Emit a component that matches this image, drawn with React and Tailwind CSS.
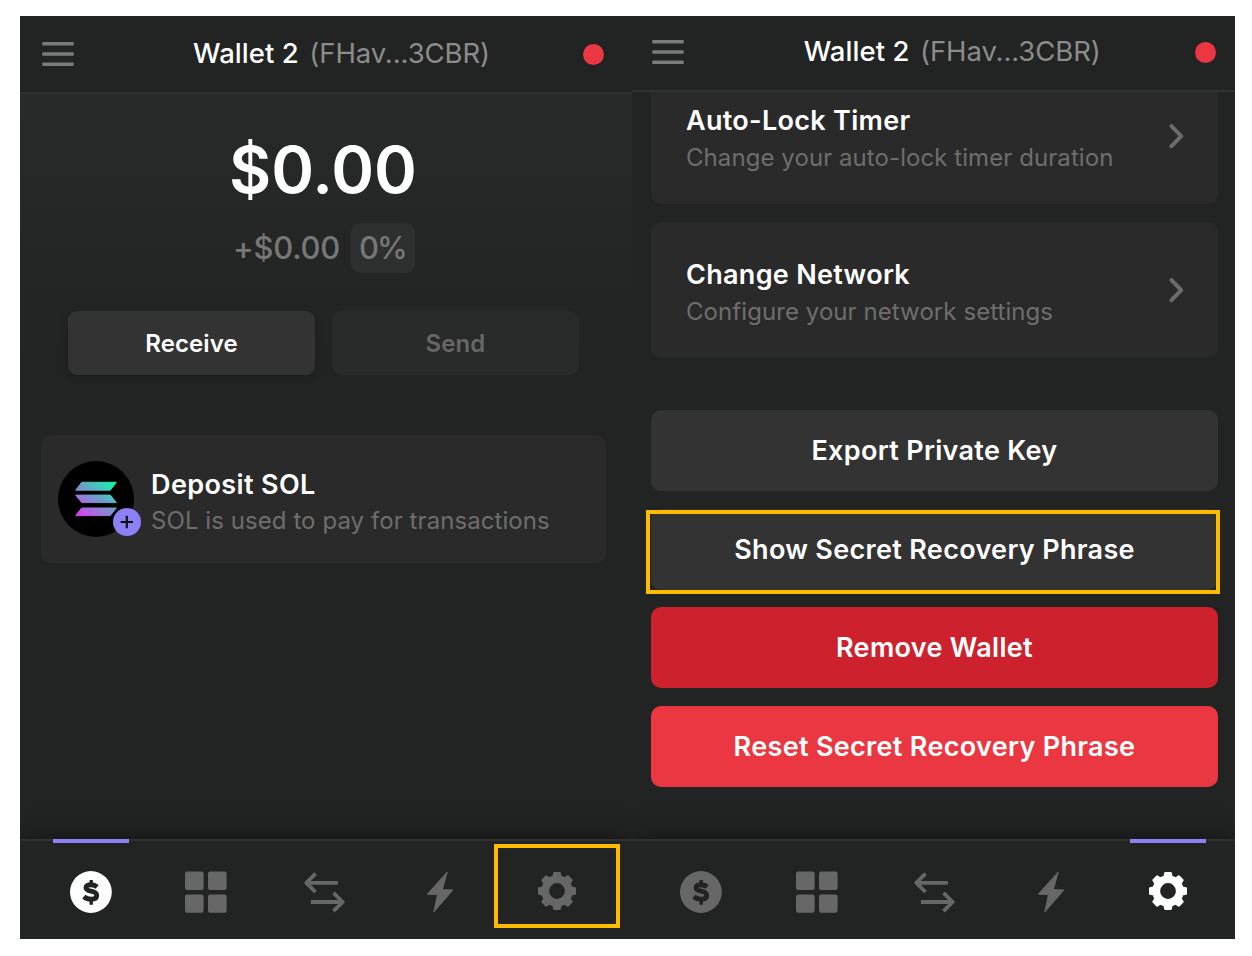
import React from "react";

const COIN_S = "M27.2 15.9C25.4 14.4 23.2 13.7 21.1 13.7C18 13.7 16 14.7 16 16.8C16 19 18.2 19.6 21.1 20.2C24.4 20.9 26.7 21.8 26.7 24.5C26.7 27.1 24.4 28.3 21.2 28.3C18.3 28.3 15.8 27.3 13.8 25.6";

function CoinIcon() {
  return (
    <svg width="42" height="42" viewBox="0 0 42 42" fill="none">
      <circle cx="20.9" cy="21" r="20.9" fill="currentColor" />
      <path d={COIN_S} stroke="#222423" strokeWidth="4.9" />
      <path d="M21.2 9V13.5M21.2 28.5V33.8" stroke="#222423" strokeWidth="3.4" />
    </svg>
  );
}

function GridIcon() {
  return (
    <svg width="42" height="42" viewBox="0.7 -0.2 42 42" fill="currentColor" className="-ml-[1.6px]">
      <rect x="0.7" y="0.2" width="18.6" height="18.6" rx="2" />
      <rect x="23.7" y="0.2" width="18.6" height="18.6" rx="2" />
      <rect x="0.7" y="23.2" width="18.6" height="18.4" rx="2" />
      <rect x="23.7" y="23.2" width="18.6" height="18.4" rx="2" />
    </svg>
  );
}

function SwapIcon() {
  return (
    <svg width="42" height="42" viewBox="-0.5 0 42 42" fill="none" stroke="currentColor" strokeWidth="3.8">
      <path d="M34.4 11.8H3M12 2.6L2.8 11.8L12 21" strokeLinejoin="round" />
      <path d="M7.4 31H39M30 21.8L39.2 31L30 40.2" strokeLinejoin="round" />
    </svg>
  );
}

function BoltIcon() {
  return (
    <svg width="42" height="42" viewBox="0 0 42 42" fill="currentColor" stroke="currentColor" strokeWidth="1" strokeLinejoin="round">
      <path d="M28.2 1L23.3 18.6L33.9 19L14.8 41L18.5 23.6L8.3 23.2Z" />
    </svg>
  );
}

function GearIcon() {
  return (
    <svg width="42" height="42" viewBox="-21 -21 42 42" fill="currentColor">
      <circle r="11.8" fill="none" stroke="currentColor" strokeWidth="7.8" />
      {[0, 45, 90, 135, 180, 225, 270, 315].map((angle) => (
        <path
          key={angle}
          transform={`rotate(${angle})`}
          stroke="currentColor"
          strokeWidth="2"
          strokeLinejoin="round"
          d="M-2.8 -18H2.8L3.6 -14H-3.6Z"
        />
      ))}
    </svg>
  );
}

function MenuIcon() {
  return (
    <svg width="32" height="26" viewBox="0 0 32 26" fill="#7b7b7b" className="block">
      <rect x="0.3" y="1" width="31.4" height="3.5" rx="0.6" />
      <rect x="0.3" y="11.2" width="31.4" height="3.5" rx="0.6" />
      <rect x="0.3" y="21.4" width="31.4" height="3.5" rx="0.6" />
    </svg>
  );
}

function SolanaIcon() {
  return (
    <svg width="43" height="36" viewBox="0.5 0 43 36" className="block">
      <defs>
        <linearGradient id="solana" gradientUnits="userSpaceOnUse" x1="38" y1="-3" x2="9" y2="38">
          <stop offset="0.08" stopColor="#19f2ae" />
          <stop offset="0.5" stopColor="#6f9ccb" />
          <stop offset="1" stopColor="#dc3fee" />
        </linearGradient>
      </defs>
      <g fill="url(#solana)" stroke="url(#solana)" strokeWidth="1" strokeLinejoin="round">
        <path d="M7.2 1.3H41.8L35.8 9.2H1.1Z" />
        <path d="M1.1 14.1H35.8L41.8 21.6H7.2Z" />
        <path d="M7.2 27H41.8L35.8 34.6H1.1Z" />
      </g>
    </svg>
  );
}

function Chevron() {
  return (
    <svg width="16" height="26" viewBox="0 0 16 26" fill="none" stroke="#6c6c6c" strokeWidth="4" strokeLinecap="round" strokeLinejoin="round" className="block">
      <path d="M2.5 3.2L12.2 13.2L2.5 23.2" />
    </svg>
  );
}

function Title() {
  return (
    <div className="flex w-[297px] shrink-0 gap-[10.5px] whitespace-nowrap text-[27.5px] leading-[34px]">
      <span className="font-medium tracking-[0.05px] text-white">Wallet 2</span>
      <span className="tracking-[-0.08px] text-[#8c8c8c]">(FHav...3CBR)</span>
    </div>
  );
}

const TABS = [
  { name: "balance", Icon: CoinIcon },
  { name: "collectibles", Icon: GridIcon },
  { name: "swap", Icon: SwapIcon },
  { name: "activity", Icon: BoltIcon },
  { name: "settings", Icon: GearIcon },
];

function TabBar({ active, highlight, className }) {
  return (
    <nav className={"z-10 h-[100px] shrink-0 border-t-2 border-[#303030] bg-[#222423] shadow-[0_-4px_24px_rgba(0,0,0,0.38)] " + className}>
      <div className="grid h-full w-[583px] grid-cols-5">
        {TABS.map(({ name, Icon }) => (
          <div
            key={name}
            className={"relative flex justify-center pt-[30px] " + (name === active ? "text-white" : "text-[#676767]")}
          >
            {name === active && <span className="absolute -top-[2px] left-[20.3px] h-[3.6px] w-[76px] bg-[#8b80f5]" />}
            <span className={name === "settings" ? "-mt-[1.5px]" : ""}>
              <Icon />
            </span>
            {name === highlight && (
              <span className="absolute -left-[4.6px] top-[3px] h-[84px] w-[126px] border-4 border-[#ffbb00]" />
            )}
          </div>
        ))}
      </div>
    </nav>
  );
}

function SettingsRow({ title, detail, className }) {
  return (
    <div className={"flex h-[136px] shrink-0 items-center justify-between rounded-[10px] bg-[#2a2a2a] pl-[35px] pr-[33px] " + className}>
      <div className="whitespace-nowrap pt-[6px]">
        <div className="text-[27px] font-semibold leading-[38px] tracking-[0.3px] text-white">{title}</div>
        <div className="-mt-[1px] pb-[1px] text-[24px] leading-[37px] tracking-[0.07px] text-[#6e6e6e]">{detail}</div>
      </div>
      <Chevron />
    </div>
  );
}

function ActionButton({ children, className }) {
  return (
    <button className={"relative flex h-[81px] w-full shrink-0 items-center justify-center whitespace-nowrap rounded-[10px] pt-[1px] text-[27px] font-semibold tracking-[0.32px] text-white " + className}>
      {children}
    </button>
  );
}

function WalletPanel() {
  return (
    <section className="flex w-[612px] flex-col overflow-hidden bg-[#222423]">
      <header className="flex h-[78px] shrink-0 items-center border-b-2 border-[#303131] pl-[22px]">
        <MenuIcon />
        <div className="ml-[119px] -mt-[2px]">
          <Title />
        </div>
        <span className="ml-[93px] size-[21px] rounded-full bg-[#eb3742]" />
      </header>
      <main className="flex grow flex-col bg-[linear-gradient(#282a29_0px,#222423_260px)]">
        <div className="mt-[36px] flex h-[80px] w-[606px] items-center justify-center whitespace-nowrap text-[65px] font-semibold text-white">
          $0.00
        </div>
        <div className="ml-[213px] mt-[13px] flex h-[50px] items-center text-[31px] font-medium text-[#777777]">
          <span className="w-[118px] pt-[1px] tracking-[-0.25px]">+$0.00</span>
          <span className="flex h-[50px] w-[64px] items-center justify-center rounded-[10px] bg-[#2e2f2f] pr-[1px] pt-[1px] text-[31px] tracking-[-1.8px]">0%</span>
        </div>
        <div className="ml-[48px] mt-[38px] grid h-[64px] w-[511px] grid-cols-2 gap-[17px] text-[24px] font-semibold">
          <button className="rounded-[9px] bg-[#333333] pt-[2px] tracking-[0.1px] text-white shadow-[0_2px_8px_rgba(0,0,0,0.2)]">Receive</button>
          <button className="rounded-[9px] bg-[#292a2a] pt-[2px] tracking-[0.1px] text-[#676767]">Send</button>
        </div>
        <div className="ml-[21px] mt-[60px] flex h-[128px] w-[565px] items-center rounded-[10px] bg-[#2a2a2a] pl-[17px]">
          <div className="relative flex size-[76px] items-center justify-center rounded-full bg-black">
            <SolanaIcon />
            <span className="absolute left-[55px] top-[46.5px] flex size-[28px] items-center justify-center rounded-full bg-[#8b80f5]">
              <svg width="14" height="14" viewBox="0 0 14 14" stroke="#111111" strokeWidth="2.2">
                <path d="M6.8 0.8V13.2M0.6 7H13" />
              </svg>
            </span>
          </div>
          <div className="ml-[17px] whitespace-nowrap pt-[7px]">
            <div className="text-[27px] font-semibold leading-[36px] tracking-[0.38px] text-white">Deposit SOL</div>
            <div className="text-[24px] leading-[36px] tracking-[0.07px] text-[#6e6e6e]">SOL is used to pay for transactions</div>
          </div>
        </div>
      </main>
      <TabBar active="balance" highlight="settings" className="pl-[12.3px]" />
    </section>
  );
}

function SettingsPanel() {
  return (
    <section className="flex w-[603px] flex-col overflow-hidden bg-[#222423]">
      <header className="z-10 flex h-[76px] shrink-0 items-center border-b-2 border-[#303131] bg-[#222423] pb-[2px] pl-[20.4px]">
        <MenuIcon />
        <div className="ml-[119.3px] -mt-[2px]">
          <Title />
        </div>
        <span className="ml-[94.3px] size-[21px] rounded-full bg-[#eb3742]" />
      </header>
      <main className="flex grow flex-col px-[19px] pr-[17px]">
        <SettingsRow title="Auto-Lock Timer" detail="Change your auto-lock timer duration" className="-mt-[23.6px]" />
        <SettingsRow title="Change Network" detail="Configure your network settings" className="mt-[17.6px]" />
        <div className="mt-[52px] flex flex-col gap-[17.7px]">
          <ActionButton className="bg-[#333333]">Export Private Key</ActionButton>
          <ActionButton className="bg-[#333333] pt-[2px]">
            <span>Show Secret Recovery Phrase</span>
            <span className="absolute -left-[5px] top-[1px] h-[84px] w-[574px] border-4 border-[#ffbb00]" />
          </ActionButton>
          <ActionButton className="bg-[#cd222e]">Remove Wallet</ActionButton>
          <ActionButton className="bg-[#eb3742]">Reset Secret Recovery Phrase</ActionButton>
        </div>
      </main>
      <TabBar active="settings" className="pl-[10.9px]" />
    </section>
  );
}

export default function App() {
  return (
    <div className="flex h-[956px] w-[1252px] bg-white pb-[17px] pl-[20px] pt-[16px] font-['Inter',sans-serif]">
      <WalletPanel />
      <SettingsPanel />
    </div>
  );
}
